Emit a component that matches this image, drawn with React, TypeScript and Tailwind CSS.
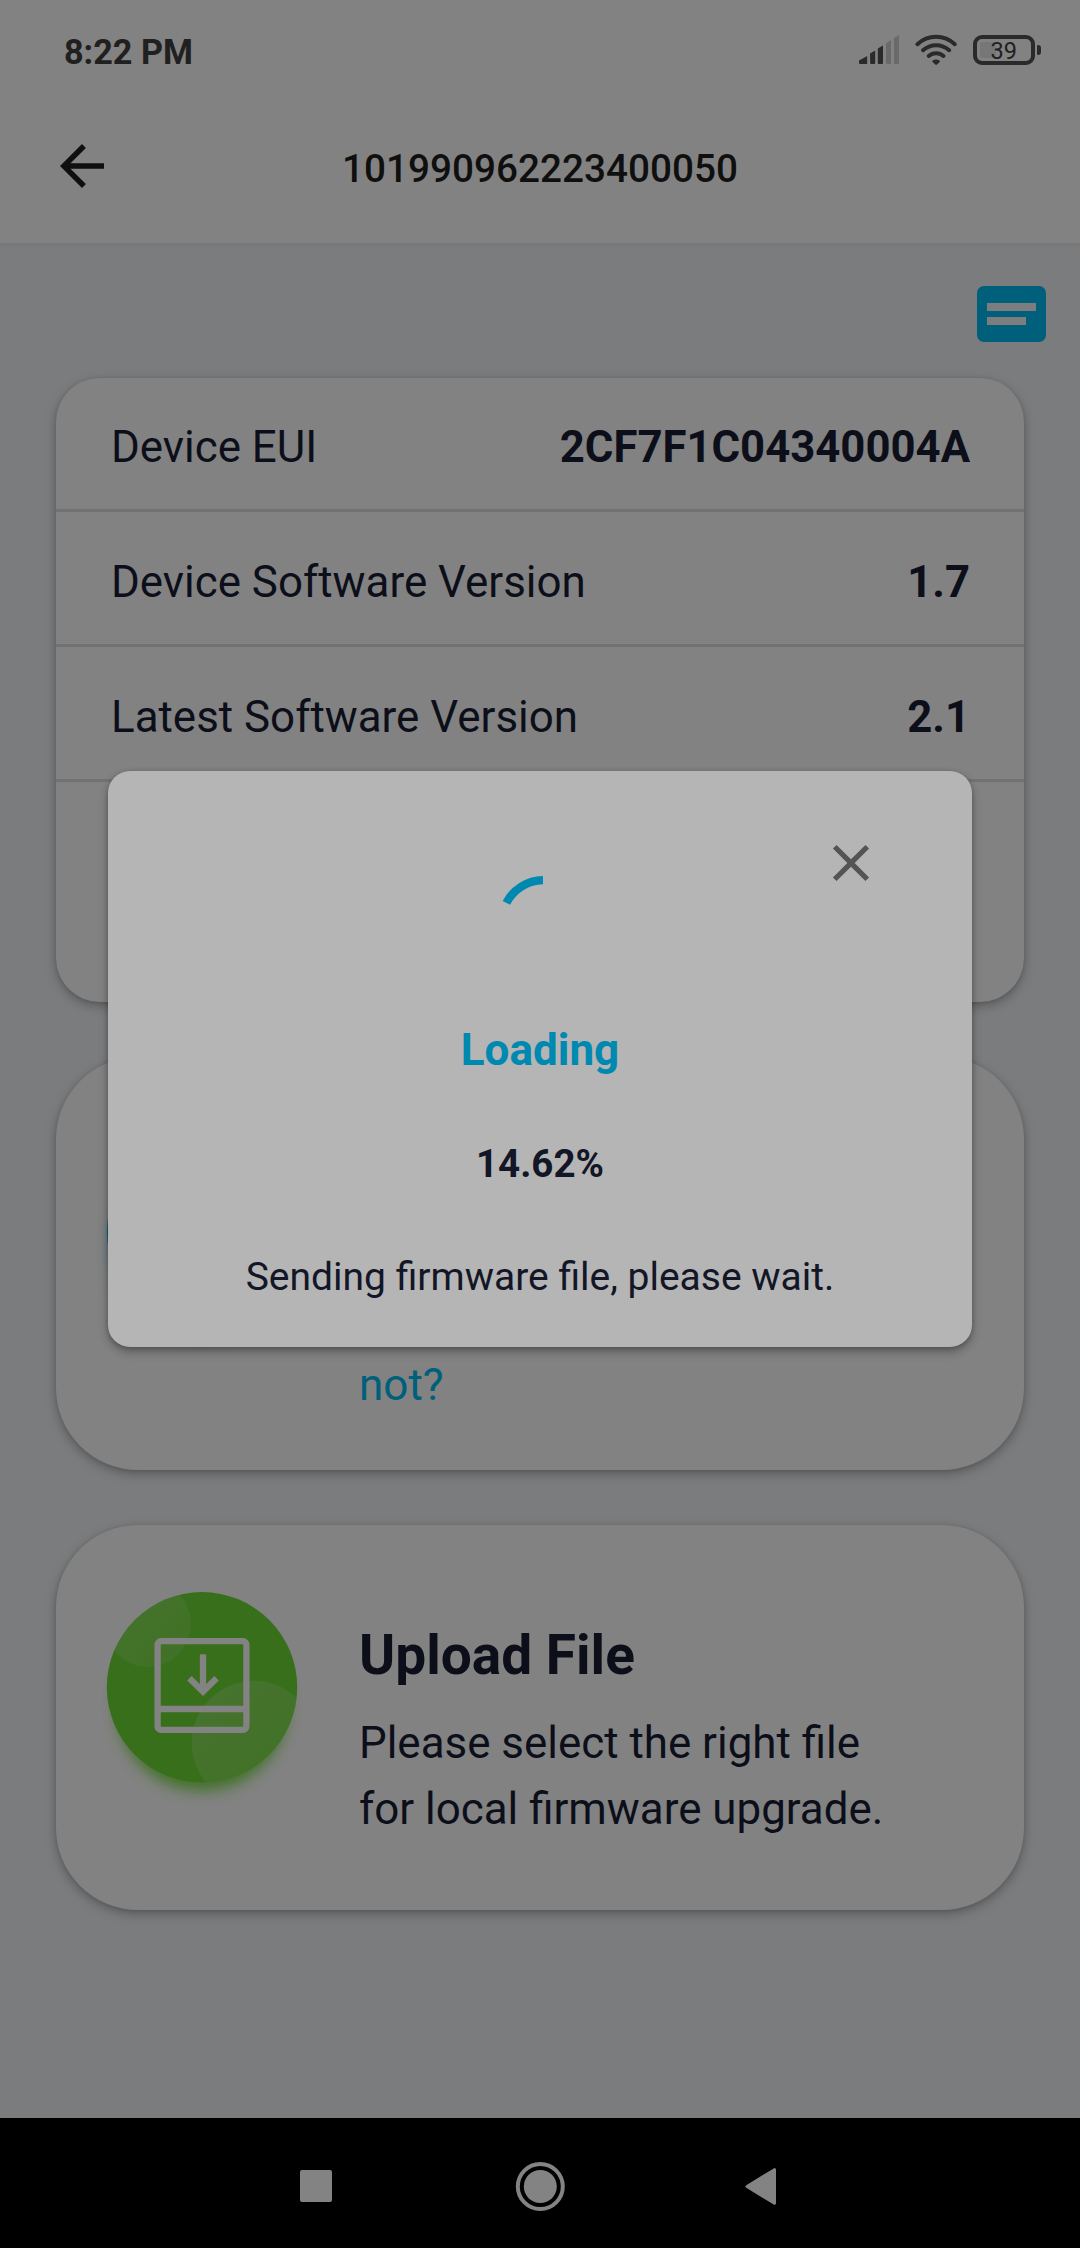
import React from "react";

const CARD_SHADOW = "shadow-[0_4px_12px_rgba(0,0,0,0.26),0_1px_4px_rgba(0,0,0,0.12)]";

function SignalIcon() {
  return (
    <svg width="42" height="32" viewBox="0 0 42 32" className="block">
      <g fill="#2a2a2a">
        <path d="M1 26.5 9.2 22v8H2q-1 0-1-1z" />
        <path d="M12 19.5 17.2 16.500v12.500q0 1-1 1h-3q-1 0-1-1z" />
        <path d="M19.800 14.500 25 11.500v17.500q0 1-1 1h-3.200q-1 0-1-1z" />
      </g>
      <g fill="#6a6a6a">
        <path d="M28 9.500 33 6v23q0 1-1 1h-3q-1 0-1-1z" />
        <path d="M36 4 41 1v28q0 1-1 1h-3q-1 0-1-1z" />
      </g>
    </svg>
  );
}

function WifiIcon() {
  return (
    <svg
      width="44"
      height="32"
      viewBox="0 0 44 32"
      className="block"
      fill="none"
      stroke="#2a2a2a"
      strokeWidth="4"
      strokeLinecap="round"
    >
      <path d="M3.400 10.200A27 27 0 0 1 40.800 10.200" />
      <path d="M9 16.200A19.500 19.500 0 0 1 35.200 16.200" />
      <path d="M14.700 22A11 11 0 0 1 29.500 22" />
      <path d="M19.600 27.400q2.500-1.400 5 0L22.100 29.600z" strokeWidth="2.500" strokeLinejoin="round" fill="#2a2a2a" />
    </svg>
  );
}

function Battery() {
  return (
    <div className="flex items-center gap-[2px]">
      <div className="flex h-[30px] w-[62px] items-center rounded-[9px] border-4 border-[#2a2a2a] pl-[3px]">
        <div className="flex h-4 w-4 items-center rounded-[2px] bg-[#777777]">
          <span className="mt-[2px] pl-[10.5px] text-[23.500px] leading-[28px] text-[#202020]">39</span>
        </div>
      </div>
      <div className="h-[10px] w-1 rounded-r-[3px] rounded-l-[1px] bg-[#2a2a2a]" />
    </div>
  );
}

function StatusBar() {
  return (
    <div className="flex h-[100px] items-center justify-between pr-[39px] pl-[64px]">
      <span className="mt-[3px] text-[34.200px] leading-10 font-bold text-[#202020]">8:22 PM</span>
      <div className="flex items-center gap-[14px]">
        <SignalIcon />
        <div className="flex items-center gap-[15px]">
          <WifiIcon />
          <Battery />
        </div>
      </div>
    </div>
  );
}

function TitleBar() {
  return (
    <div className="grid h-[143px] grid-cols-[115px_1fr_115px] items-start">
      <svg width="66" height="66" viewBox="0 0 24 24" className="mt-[33px] ml-[49px]" fill="#0f0f0f">
        <path d="M20 11H7.830l5.590-5.590L12 4l-8 8 8 8 1.410-1.410L7.830 13H20v-2z" />
      </svg>
      <h1 className="mt-[45px] text-center text-[38.700px] leading-[48px] font-medium text-[#0f0f0f]">
        101990962223400050
      </h1>
    </div>
  );
}

function MessageIcon() {
  return (
    <div className="flex h-[56px] w-[69px] flex-col gap-[6px] rounded-[7px] bg-[#005f7a] pt-[17px] pl-[10px]">
      <div className="h-2 w-[49px] bg-[#7c7d7f]" />
      <div className="h-2 w-[38.5px] bg-[#7c7d7f]" />
    </div>
  );
}

const rows = [
  ["Device EUI", "2CF7F1C04340004A"],
  ["Device Software Version", "1.7"],
  ["Latest Software Version", "2.1"],
];

function DeviceCard() {
  return (
    <section className={`h-[624px] rounded-[44px] bg-[#828282] ${CARD_SHADOW}`}>
      {rows.map(([label, value]) => (
        <div
          key={label}
          className="flex h-[135px] items-start justify-between border-b-[3px] border-[#727272] pt-[40px] pr-[54px] pl-[55px] text-[44px] leading-[60px] text-[#0c0f1a] first:h-[134px] first:pt-[39px]"
        >
          <span className="text-[43.900px]">{label}</span>
          <span className="text-[43.700px] font-bold">{value}</span>
        </div>
      ))}
    </section>
  );
}

function UpdateCard() {
  return (
    <section className={`flex h-[413px] gap-[62px] rounded-[82px] bg-[#828282] pl-[51px] ${CARD_SHADOW}`}>
      <div className="mt-[80px] h-[190px] w-[190px] rounded-full bg-[#005f7a] shadow-[0_14px_14px_-4px_rgba(0,95,122,0.5)]" />
      <p className="mt-[295px] text-[44px] leading-[66px] text-[#005f7a]">not?</p>
    </section>
  );
}

function UploadIcon() {
  return (
    <svg width="190" height="190" viewBox="0 0 190 190" className="mt-[67px] shrink-0 overflow-visible">
      <defs>
        <clipPath id="disc">
          <circle cx="95" cy="95.3" r="95.2" />
        </clipPath>
        <filter id="glow" x="-20%" y="-20%" width="140%" height="150%">
          <feGaussianBlur stdDeviation="7" />
        </filter>
        <linearGradient id="bubble" x1="0" y1="0" x2="1" y2="1">
          <stop offset="0" stopColor="#838383" stopOpacity="0.2" />
          <stop offset="1" stopColor="#838383" stopOpacity="0.1" />
        </linearGradient>
      </defs>
      <circle cx="95" cy="113" r="86" fill="#386f1a" opacity="0.85" filter="url(#glow)" />
      <circle cx="95" cy="95.3" r="95.2" fill="#386f1a" />
      <g clipPath="url(#disc)">
        <circle cx="41" cy="32" r="43" fill="url(#bubble)" />
        <circle cx="147" cy="151" r="62.200" fill="url(#bubble)" />
      </g>
      <g fill="none" stroke="#838383" strokeWidth="6.300">
        <rect x="50.600" y="49.200" width="88.800" height="88.600" rx="3.500" />
        <path d="M51 117H139" />
        <path d="M96 62.300V99" />
        <path d="M82.400 86.200 96 99.600 109.600 86.200" />
      </g>
    </svg>
  );
}

function UploadCard() {
  return (
    <section className={`flex h-[385px] gap-[62px] rounded-[82px] bg-[#828282] pl-[51px] ${CARD_SHADOW}`}>
      <UploadIcon />
      <div className="pt-[97px] text-[#0c0f1a]">
        <h2 className="text-[55px] leading-[66px] font-bold">Upload File</h2>
        <p className="mt-[22px] text-[43.900px] leading-[66px]">
          Please select the right file
          <br />
          for local firmware upgrade.
        </p>
      </div>
    </section>
  );
}

function LoadingDialog() {
  return (
    <div className="absolute inset-x-0 top-0 flex justify-center pt-[771px]">
      <div className="relative flex h-[576px] w-[864px] flex-col items-center rounded-[22px] bg-[#b5b5b5] pt-[101px] shadow-[0_5px_10px_rgba(0,0,0,0.28),0_1px_5px_rgba(0,0,0,0.2)]">
        <svg viewBox="0 0 24 24" fill="#545454" className="absolute top-[61px] right-[90px] h-[62px] w-[62px]">
          <path d="M19 6.410 17.590 5 12 10.590 6.410 5 5 6.410 10.590 12 5 17.590 6.410 19 12 13.410 17.590 19 19 17.590 13.410 12z" />
        </svg>
        <svg width="100" height="100" viewBox="490 872 100 100" fill="none" stroke="#0089b0" strokeWidth="8.300">
          <path d="M506.350 902.800A42.200 42.200 0 0 1 543 880.150" />
        </svg>
        <p className="mt-[47px] text-[44px] leading-[62px] font-bold text-[#0089b0]">Loading</p>
        <p className="mt-[53px] text-[38.500px] leading-[60px] font-bold text-[#121626]">14.62%</p>
        <p className="mt-[53px] text-[39px] leading-[60px] text-[#121626]">Sending firmware file, please wait.</p>
      </div>
    </div>
  );
}

function NavBar() {
  return (
    <nav className="flex h-[130px] items-start bg-black pt-[44px] pl-[300px] text-[#838383]">
      <div className="mt-2 h-8 w-8 rounded-[2px] bg-[#838383]" />
      <svg width="50" height="50" viewBox="0 0 50 50" className="ml-[183px]">
        <circle cx="25.300" cy="24.500" r="22.500" fill="none" stroke="#838383" strokeWidth="4" />
        <circle cx="25.300" cy="24.500" r="16.500" fill="#838383" />
      </svg>
      <svg width="31" height="37" viewBox="0 0 31 37" className="mt-[6px] ml-[180px]">
        <path d="M2 18.500 29.500 1.700V35.300z" fill="#838383" stroke="#838383" strokeWidth="3" strokeLinejoin="round" />
      </svg>
    </nav>
  );
}

export default function App() {
  return (
    <div className="relative flex h-[2248px] w-[1080px] flex-col overflow-hidden bg-[#7b7c7e] font-[Roboto,sans-serif]">
      <header className="h-[243px] bg-[#828282] shadow-[0_1px_6px_rgba(0,0,0,0.06)]">
        <StatusBar />
        <TitleBar />
      </header>
      <main className="flex h-[1875px] flex-col px-[56px] pt-[43px]">
        <div className="-mr-[22px] mb-[36px] flex justify-end">
          <MessageIcon />
        </div>
        <div className="flex flex-col gap-[55px]">
          <DeviceCard />
          <UpdateCard />
          <UploadCard />
        </div>
      </main>
      <NavBar />
      <LoadingDialog />
    </div>
  );
}
